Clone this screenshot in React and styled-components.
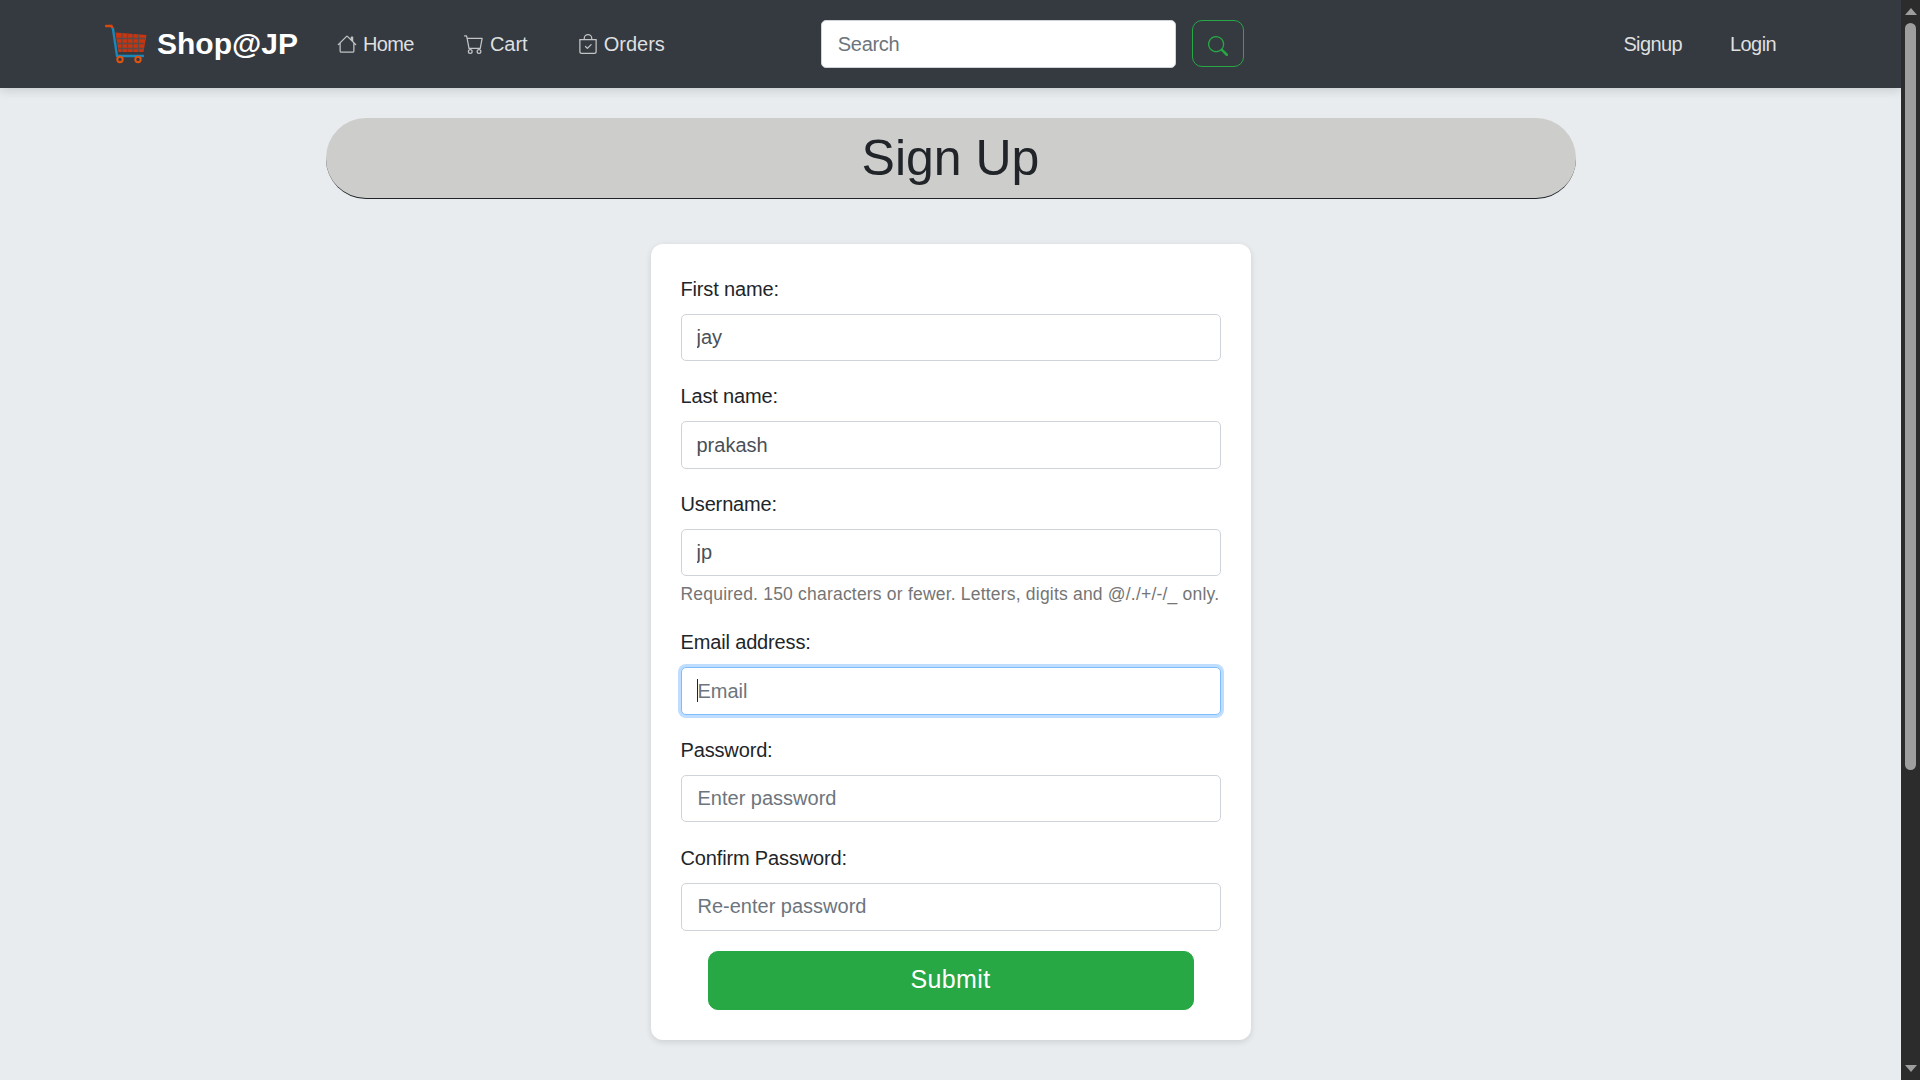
import React from "react";
import styled, { createGlobalStyle } from "styled-components";
import { BsHouse, BsCart, BsBagCheck, BsSearch } from "react-icons/bs";

const GlobalStyle = createGlobalStyle`
  body {
    margin: 0;
    background: #e8ecef;
    color: #212529;
    font-family: "Liberation Sans", Arial, sans-serif;
    font-size: 20px;
    line-height: 1.5;
  }
  * {
    box-sizing: border-box;
  }
`;

const Page = styled.div`
  display: flex;
  height: 100vh;
  overflow: hidden;
`;

const Content = styled.div`
  flex: 1;
  min-width: 0;
`;

const ScrollTrack = styled.div`
  display: flex;
  flex-direction: column;
  align-items: center;
  width: 19px;
  padding: 8px 0;
  background: #2c2c2c;
`;

const ScrollArrow = styled.div`
  width: 0;
  height: 0;
  margin-top: ${(p) => (p.$down ? "auto" : "0")};
  border-left: 6.5px solid transparent;
  border-right: 6.5px solid transparent;
  border-bottom: ${(p) => (p.$down ? "0" : "7px solid #9e9e9e")};
  border-top: ${(p) => (p.$down ? "7px solid #9e9e9e" : "0")};
`;

const ScrollThumb = styled.div`
  width: 11px;
  height: 747px;
  margin-top: 8px;
  border-radius: 6px;
  background: #9e9e9e;
`;

const Navbar = styled.nav`
  display: flex;
  align-items: center;
  height: 88px;
  padding: 0 125px 0 105px;
  background: #343a40;
  box-shadow: 0 2px 10px rgba(0, 0, 0, 0.15);
`;

const Brand = styled.a`
  display: flex;
  align-items: center;
  gap: 9px;
  margin-right: 39px;
  color: #fff;
  font-size: 30px;
  font-weight: 700;
  line-height: 1;
`;

const NavLinks = styled.div`
  display: flex;
  align-items: center;
  gap: 50px;
`;

const NavLink = styled.a`
  display: flex;
  align-items: center;
  gap: 6px;
  color: rgba(255, 255, 255, 0.85);
  letter-spacing: ${(p) => (p.$tight ? "-0.6px" : "0")};
  white-space: nowrap;
  svg {
    width: 20px;
    height: 20px;
    color: rgba(255, 255, 255, 0.7);
  }
`;

const SearchForm = styled.form`
  display: flex;
  gap: 16px;
  margin-left: 156px;
`;

const SearchInput = styled.input`
  width: 355px;
  height: 48px;
  padding: 0 16px;
  border: 1px solid #ced4da;
  border-radius: 5px;
  background: #fff;
  font: inherit;
  letter-spacing: -0.3px;
  &::placeholder {
    color: #6c757d;
    opacity: 1;
  }
`;

const SearchButton = styled.button`
  display: flex;
  align-items: center;
  justify-content: center;
  width: 52px;
  height: 47px;
  padding: 5px 0 0;
  border: 1px solid #28a745;
  border-radius: 10px;
  background: transparent;
  color: #28a745;
  svg {
    width: 20px;
    height: 20px;
  }
`;

const AuthLinks = styled.div`
  display: flex;
  gap: 48px;
  margin-left: auto;
`;

const Main = styled.main`
  display: flex;
  flex-direction: column;
  align-items: center;
  padding-top: 30px;
`;

const Banner = styled.h1`
  width: 1250px;
  height: 81px;
  margin: 0 0 45px;
  border-bottom: 1px solid #212529;
  border-radius: 40px;
  background: #cdcdcb;
  color: #212529;
  font-size: 50px;
  font-weight: 400;
  line-height: 81px;
  text-align: center;
`;

const Card = styled.form`
  width: 600px;
  padding: 30px;
  border-radius: 12px;
  background: #fff;
  box-shadow: 0 2px 6px rgba(0, 0, 0, 0.12);
`;

const Field = styled.div`
  margin-bottom: 20px;
  &:nth-last-of-type(2) {
    margin-bottom: 21px;
  }
`;

const Label = styled.label`
  display: block;
  margin-bottom: 10px;
  color: #212529;
  letter-spacing: -0.15px;
`;

const InputWrap = styled.div`
  position: relative;
`;

const Input = styled.input`
  display: block;
  width: 100%;
  height: 47.4px;
  padding: 0 15px;
  border: 1px solid ${(p) => (p.$focused ? "#80bdff" : "#ced4da")};
  border-radius: 5px;
  background: #fff;
  color: #495057;
  font: inherit;
  outline: none;
  box-shadow: ${(p) => (p.$focused ? "0 0 0 3px rgba(0, 123, 255, 0.25)" : "none")};
  &:placeholder-shown {
    padding-left: 16px;
  }
  &::placeholder {
    color: #6c757d;
    opacity: 1;
  }
`;

const Caret = styled.span`
  position: absolute;
  left: 16px;
  top: 12px;
  width: 1px;
  height: 23px;
  background: #212529;
`;

const Help = styled.small`
  display: block;
  margin-top: 5px;
  color: #757575;
  font-size: 17.5px;
  line-height: 26.25px;
  letter-spacing: 0.2px;
  white-space: nowrap;
`;

const Submit = styled.button`
  display: block;
  width: 90%;
  height: 59px;
  margin: 0 auto;
  border: 1px solid #28a745;
  border-radius: 10px;
  background: #28a745;
  color: #fff;
  font: inherit;
  font-size: 25px;
  letter-spacing: 0.4px;
`;

const CartLogo = () => (
  <svg width="43" height="42" viewBox="0 0 43 42" fill="none">
    <path d="M1 3h5.500l1.500 3" stroke="#d8480f" strokeWidth="2.400" strokeLinecap="round" />
    <path d="M8 6l4 27h26" stroke="#1c86b8" strokeWidth="2.400" strokeLinecap="round" strokeLinejoin="round" />
    <path d="M10.500 9.500l31 2.500-3 17H13.500z" fill="#c9350f" />
    <path
      d="M12 15.500h28M12.800 20.500h26.400M13.400 25.500h25M17 10v19M22.500 10.500V29M28 11v18M33.500 11.500V29"
      stroke="#5b4a48"
      strokeWidth="1.300"
    />
    <circle cx="15" cy="36.500" r="2.700" stroke="#e2530f" strokeWidth="2" />
    <circle cx="33" cy="36.500" r="2.700" stroke="#e2530f" strokeWidth="2" />
  </svg>
);

const fields = [
  { label: "First name:", value: "jay" },
  { label: "Last name:", value: "prakash" },
  {
    label: "Username:",
    value: "jp",
    help: "Required. 150 characters or fewer. Letters, digits and @/./+/-/_ only.",
  },
  { label: "Email address:", placeholder: "Email", focused: true },
  { label: "Password:", placeholder: "Enter password", type: "password" },
  { label: "Confirm Password:", placeholder: "Re-enter password", type: "password" },
];

export default function App() {
  return (
    <Page>
      <GlobalStyle />
      <Content>
        <Navbar>
          <Brand>
            <CartLogo />
            Shop@JP
          </Brand>
          <NavLinks>
            <NavLink $tight>
              <BsHouse />
              Home
            </NavLink>
            <NavLink>
              <BsCart />
              Cart
            </NavLink>
            <NavLink>
              <BsBagCheck />
              Orders
            </NavLink>
          </NavLinks>
          <SearchForm onSubmit={(e) => e.preventDefault()}>
            <SearchInput placeholder="Search" />
            <SearchButton>
              <BsSearch />
            </SearchButton>
          </SearchForm>
          <AuthLinks>
            <NavLink $tight>Signup</NavLink>
            <NavLink $tight>Login</NavLink>
          </AuthLinks>
        </Navbar>
        <Main>
          <Banner>Sign Up</Banner>
          <Card onSubmit={(e) => e.preventDefault()}>
            {fields.map((f) => (
              <Field key={f.label}>
                <Label>{f.label}</Label>
                <InputWrap>
                  <Input
                    type={f.type || "text"}
                    defaultValue={f.value}
                    placeholder={f.placeholder}
                    $focused={f.focused}
                  />
                  {f.focused && <Caret />}
                </InputWrap>
                {f.help && <Help>{f.help}</Help>}
              </Field>
            ))}
            <Submit>Submit</Submit>
          </Card>
        </Main>
      </Content>
      <ScrollTrack>
        <ScrollArrow />
        <ScrollThumb />
        <ScrollArrow $down />
      </ScrollTrack>
    </Page>
  );
}
